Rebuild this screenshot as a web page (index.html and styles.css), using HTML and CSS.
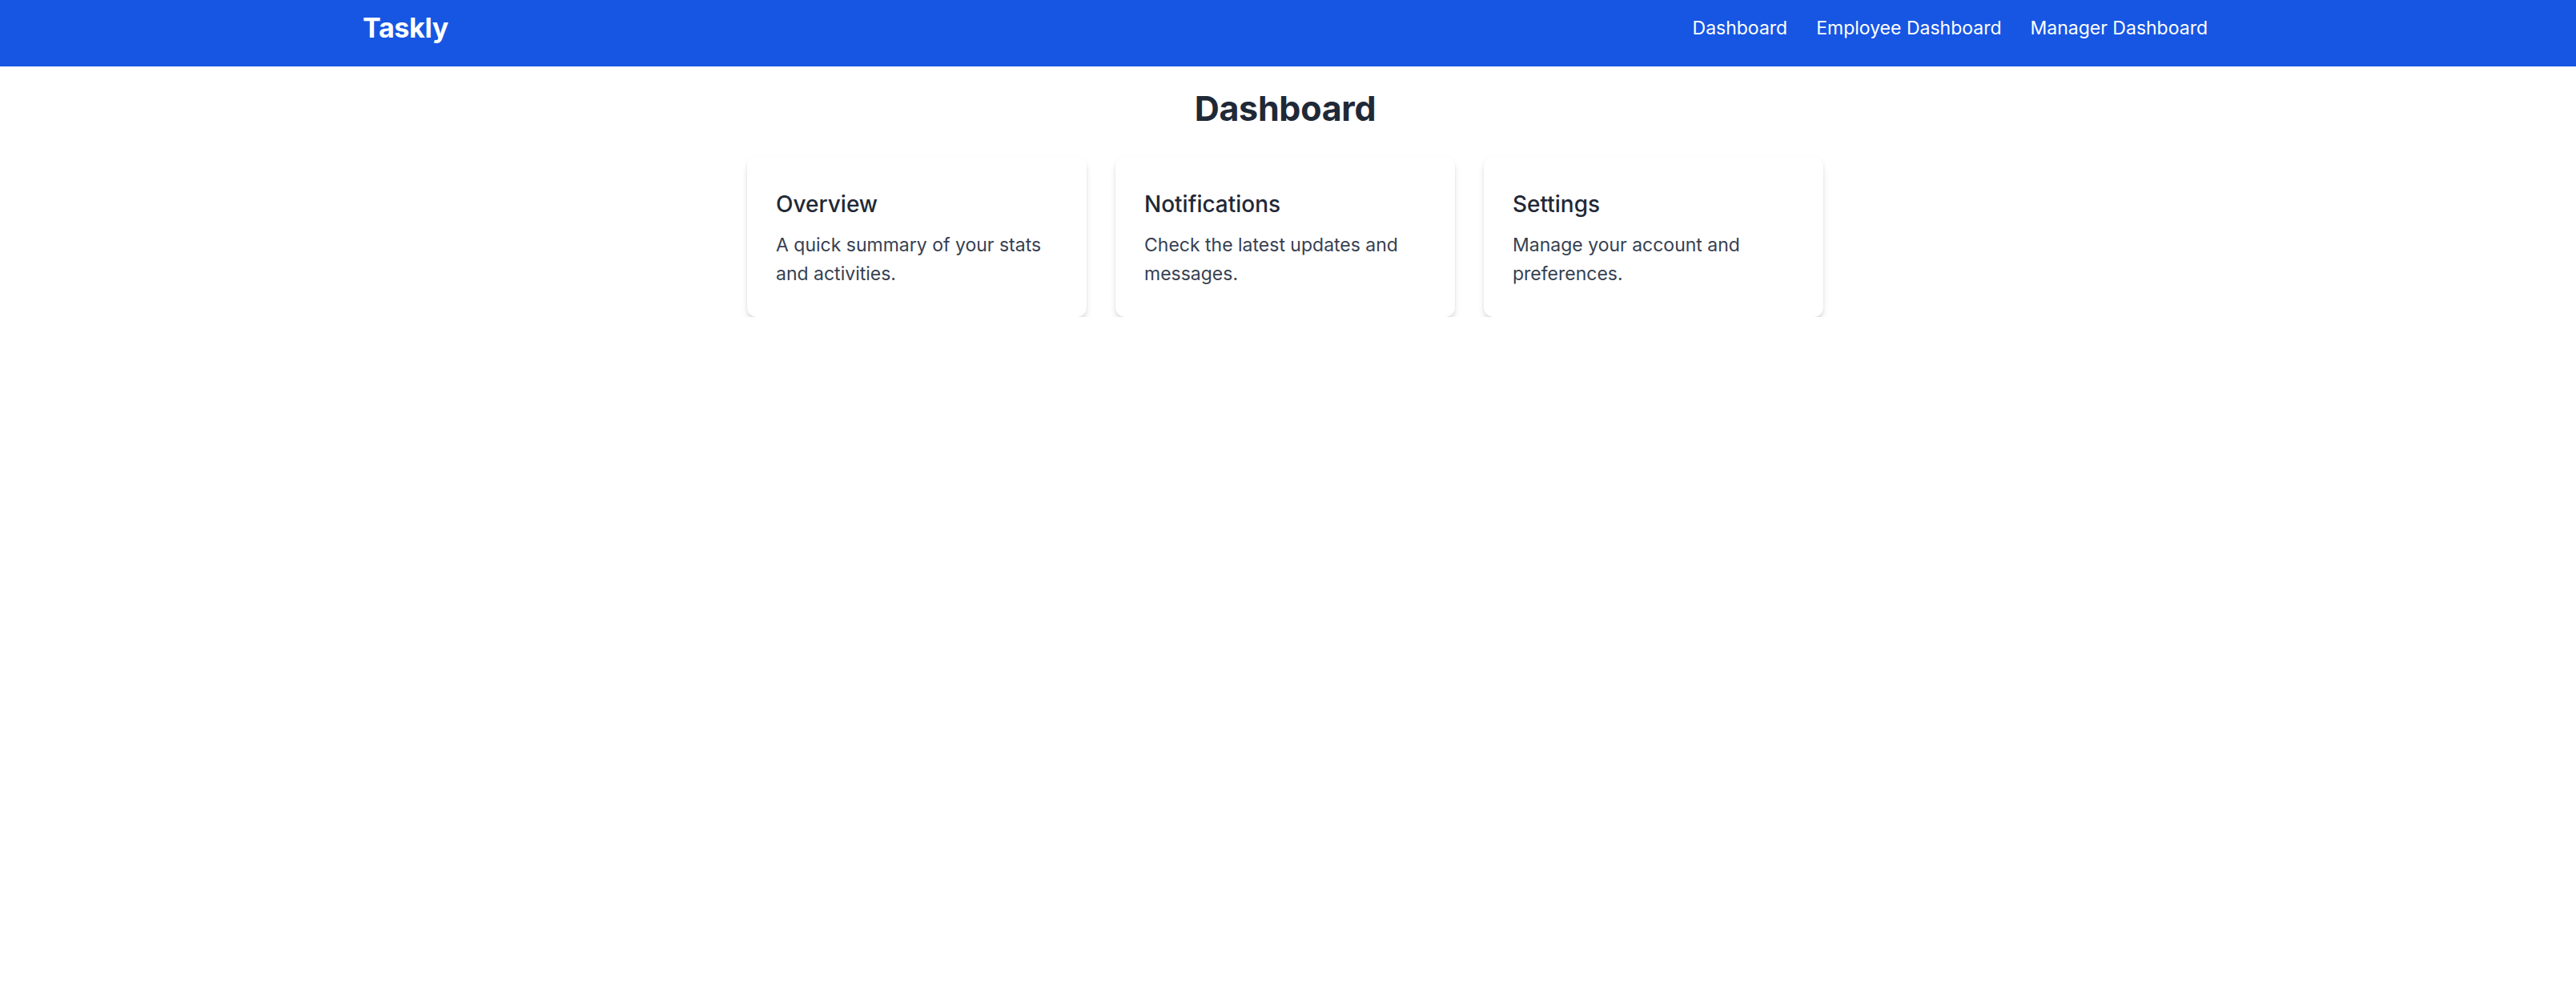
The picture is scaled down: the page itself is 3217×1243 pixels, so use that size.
FILE: index.html
```html
<!DOCTYPE html>
<html lang="en">
<head>
<meta charset="utf-8">
<title>Taskly</title>
<link rel="stylesheet" href="styles.css">
</head>
<body>
<header class="topbar">
  <div class="topbar-inner">
    <div class="brand">Taskly</div>
    <nav class="nav">
      <a href="#" class="nav-link">Dashboard</a>
      <a href="#" class="nav-link">Employee Dashboard</a>
      <a href="#" class="nav-link">Manager Dashboard</a>
    </nav>
  </div>
</header>
<main class="main">
  <h1 class="page-title">Dashboard</h1>
  <div class="cards">
    <div class="card">
      <h2 class="card-title">Overview</h2>
      <p class="card-text">A quick summary of your stats and activities.</p>
    </div>
    <div class="card">
      <h2 class="card-title">Notifications</h2>
      <p class="card-text">Check the latest updates and messages.</p>
    </div>
    <div class="card">
      <h2 class="card-title">Settings</h2>
      <p class="card-text">Manage your account and preferences.</p>
    </div>
  </div>
</main>
</body>
</html>
```

FILE: styles.css
```css
* { box-sizing: border-box; }
html, body { margin: 0; padding: 0; background: #ffffff; }
body {
  font-family: Inter, "Noto Sans", "Liberation Sans", sans-serif;
  color: #1f2937;
}
.topbar {
  background: #1756e2;
  height: 83px;
  padding: 14px 7px 0 0;
}
.topbar-inner {
  max-width: 2304px;
  margin: 0 auto;
  height: 42px;
  display: flex;
  align-items: center;
  justify-content: space-between;
}
.brand {
  color: #ffffff;
  font-weight: 700;
  font-size: 34px;
  line-height: 42px;
  letter-spacing: -0.3px;
}
.nav {
  display: flex;
  gap: 36px;
}
.nav-link {
  color: #ffffff;
  text-decoration: none;
  font-size: 23px;
  line-height: 34px;
}
.main {
  padding: 25px 7px 0 0;
}
.page-title {
  margin: 0;
  text-align: center;
  font-size: 43px;
  line-height: 54px;
  font-weight: 700;
  color: #1f2937;
  letter-spacing: -0.3px;
}
.cards {
  max-width: 1344px;
  margin: 33px auto 0;
  display: grid;
  grid-template-columns: repeat(3, 1fr);
  gap: 36px;
}
.card {
  background: #ffffff;
  border-radius: 12px;
  padding: 39px 36px 36px;
  box-shadow: 0 6px 9px -1.5px rgba(0,0,0,0.13), 0 3px 6px -3px rgba(0,0,0,0.12), 0 0 2px rgba(0,0,0,0.03);
}
.card-title {
  margin: 0 0 12px;
  font-size: 28px;
  line-height: 42px;
  font-weight: 500;
  color: #1f2937;
}
.card-text {
  margin: 0;
  font-size: 23px;
  line-height: 36px;
  color: #374151;
}
```
